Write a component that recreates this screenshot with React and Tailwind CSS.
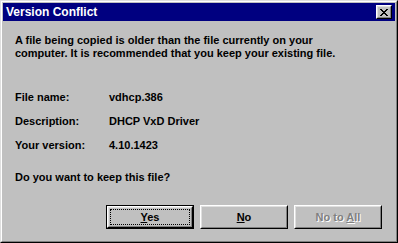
const xPixels = [
  [0, 0, 2], [6, 0, 2],
  [1, 1, 2], [5, 1, 2],
  [2, 2, 4],
  [3, 3, 2],
  [2, 4, 4],
  [1, 5, 2], [5, 5, 2],
  [0, 6, 2], [6, 6, 2],
];

const CloseGlyph = () => (
  <svg
    width="8"
    height="7"
    viewBox="0 0 8 7"
    shapeRendering="crispEdges"
    className="block shrink-0 w-[8px] h-[7px]"
  >
    {xPixels.map(([x, y, w], i) => (
      <rect key={i} x={x} y={y} width={w} height="1" fill="#000000" />
    ))}
  </svg>
);

const Bevel = ({ children, className = '' }) => (
  <div className="h-full border border-t-white border-l-white border-r-black border-b-black">
    <div
      className={`h-full border border-t-[#dfdfdf] border-l-[#dfdfdf] border-r-[#808080] border-b-[#808080] ${className}`}
    >
      {children}
    </div>
  </div>
);

const DialogButton = ({ children, isDefault, disabled }) => (
  <div
    className={`w-[88px] h-[24px] ${isDefault ? 'border border-black' : ''} ${
      disabled ? 'text-[#808080] [text-shadow:1px_1px_0_#fff]' : 'text-black'
    }`}
  >
    {isDefault ? (
      <Bevel className="flex p-px">
        <div className="flex-1 border border-dotted border-black flex items-center justify-center">
          {children}
        </div>
      </Bevel>
    ) : (
      <Bevel className="flex items-center justify-center">{children}</Bevel>
    )}
  </div>
);

export default function App() {
  return (
    <div className="w-[398px] h-[243px] bg-[#c0c0c0] border border-t-[#dfdfdf] border-l-[#dfdfdf] border-r-black border-b-black font-['Liberation_Sans',Arial,sans-serif] font-bold text-[11px] leading-[13px]">
      <div className="h-full border border-t-white border-l-white border-r-[#808080] border-b-[#808080] p-px flex flex-col">
        <div className="h-[18px] bg-[#000080] flex items-center justify-between pl-[3px] pr-[3px]">
          <span className="text-white text-[12px]">Version Conflict</span>
          <div className="w-[16px] h-[14px] shrink-0 bg-[#c0c0c0]">
            <Bevel className="flex items-center justify-center">
              <CloseGlyph />
            </Bevel>
          </div>
        </div>

        <div className="flex-1 pl-[12px] pr-[13px] pt-[13px] text-black">
          <p>
            A file being copied is older than the file currently on your
            <br />
            computer. It is recommended that you keep your existing file.
          </p>

          <div className="mt-[31px] grid grid-cols-[94px_1fr] gap-y-[11px]">
            <span>File name:</span>
            <span>vdhcp.386</span>
            <span>Description:</span>
            <span>DHCP VxD Driver</span>
            <span>Your version:</span>
            <span>4.10.1423</span>
          </div>

          <p className="mt-[19px]">Do you want to keep this file?</p>

          <div className="mt-[21px] flex justify-end gap-[6px]">
            <DialogButton isDefault>
              <span>
                <u>Y</u>es
              </span>
            </DialogButton>
            <DialogButton>
              <span>
                <u>N</u>o
              </span>
            </DialogButton>
            <DialogButton disabled>
              <span>
                No to <u>A</u>ll
              </span>
            </DialogButton>
          </div>
        </div>
      </div>
    </div>
  );
}
